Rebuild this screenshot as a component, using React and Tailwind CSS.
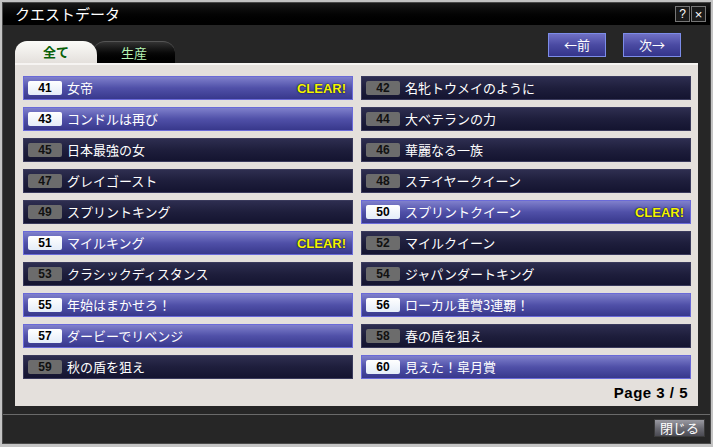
import React from 'react';

const quests = [
  { no: 41, title: '女帝', open: true, clear: true },
  { no: 42, title: '名牝トウメイのように' },
  { no: 43, title: 'コンドルは再び', open: true },
  { no: 44, title: '大ベテランの力' },
  { no: 45, title: '日本最強の女' },
  { no: 46, title: '華麗なる一族' },
  { no: 47, title: 'グレイゴースト' },
  { no: 48, title: 'ステイヤークイーン' },
  { no: 49, title: 'スプリントキング' },
  { no: 50, title: 'スプリントクイーン', open: true, clear: true },
  { no: 51, title: 'マイルキング', open: true, clear: true },
  { no: 52, title: 'マイルクイーン' },
  { no: 53, title: 'クラシックディスタンス' },
  { no: 54, title: 'ジャパンダートキング' },
  { no: 55, title: '年始はまかせろ！', open: true },
  { no: 56, title: 'ローカル重賞3連覇！', open: true },
  { no: 57, title: 'ダービーでリベンジ', open: true },
  { no: 58, title: '春の盾を狙え' },
  { no: 59, title: '秋の盾を狙え' },
  { no: 60, title: '見えた！皐月賞', open: true },
];

const jp = { fontFamily: '"Noto Sans CJK JP", "Liberation Sans", sans-serif' };
const num = { fontFamily: '"Liberation Sans", Arial, sans-serif' };

const QuestRow = ({ quest }) => (
  <div
    className={`flex items-center h-[24px] border ${
      quest.open
        ? 'border-[#6a6ad8] bg-gradient-to-b from-[#8080cc] via-[#5050a8] to-[#38388c]'
        : 'border-[#3a3a5c] bg-gradient-to-b from-[#2e2e50] via-[#1e1e3c] to-[#141430]'
    }`}
  >
    <div
      className={`ml-[4px] w-[34px] h-[14px] flex items-center justify-center text-[12px] font-bold leading-none rounded-[2px] ${
        quest.open ? 'bg-gradient-to-b from-[#ffffff] to-[#e4ecf8] text-black' : 'bg-[#6c6c6c] text-[#111]'
      }`}
      style={num}
    >
      {quest.no}
    </div>
    <span className="ml-[5px] -mt-[2px] text-white text-[13px] leading-none" style={jp}>
      {quest.title}
    </span>
    {quest.clear && (
      <span
        className="ml-auto mr-[6px] text-[#f4f400] text-[13px] font-bold leading-none [text-shadow:0_0_2px_#101040,0_0_1px_#101040]"
        style={num}
      >
        CLEAR!
      </span>
    )}
  </div>
);

const NavButton = ({ children }) => (
  <button
    className="w-[58px] h-[24px] border border-[#7c8ce8] bg-gradient-to-b from-[#7070c4] via-[#4a4aa2] to-[#34348a] text-white text-[13px] leading-none flex items-center justify-center"
    style={jp}
  >
    <span className="-mt-[2px]">{children}</span>
  </button>
);

const App = () => {
  return (
    <div className="w-[713px] h-[447px] bg-[#c4c4c4] pt-[2px] pl-[2px] pr-[2px] pb-[3px]">
      <div className="h-full border border-[#4a4a4a] bg-[#262626] flex flex-col">
        <div className="h-[22px] bg-gradient-to-b from-[#1a1a1a] to-[#000] flex items-center pl-[12px] pr-[4px]">
          <span className="-mt-[2px] text-white text-[15px] leading-none" style={jp}>クエストデータ</span>
          <div className="ml-auto flex gap-[1px]">
            <div className="w-[15px] h-[16px] border border-[#777] bg-[#1a1a1a] text-white text-[12px] leading-none flex items-center justify-center" style={num}>?</div>
            <div className="w-[15px] h-[16px] border border-[#777] bg-[#1a1a1a] text-white text-[13px] leading-none flex items-center justify-center" style={num}>×</div>
          </div>
        </div>

        <div className="h-[38px] flex items-end pl-[12px] pr-[29px]">
          <div className="flex items-end">
            <div
              className="w-[82px] h-[22px] bg-gradient-to-b from-[#fbfbf8] to-[#e4e0dc] rounded-tl-[12px] rounded-tr-[14px] flex items-center justify-center text-[#086008] text-[13px] font-bold leading-none z-10"
              style={jp}
            >
              <span className="-mt-[1px]">全て</span>
            </div>
            <div
              className="-ml-[4px] w-[82px] h-[22px] bg-gradient-to-b from-[#333] via-[#0a0a0a] to-[#000] border-t border-[#555] rounded-tl-[12px] rounded-tr-[12px] flex items-center justify-center text-[#b4f4b4] text-[13px] leading-none"
              style={jp}
            >
              <span className="-mt-[1px]">生産</span>
            </div>
          </div>
          <div className="ml-auto self-start mt-[8px] flex gap-[17px]">
            <NavButton>←前</NavButton>
            <NavButton>次→</NavButton>
          </div>
        </div>

        <div className="mx-[12px] h-[343px] bg-[#e4e0dc] border-t-[2px] border-[#f6f4f2] pt-[11px] pl-[8px] pr-[7px] flex flex-col">
          <div className="grid grid-cols-2 gap-x-[8px] gap-y-[7px]">
            {quests.map((q) => (
              <QuestRow key={q.no} quest={q} />
            ))}
          </div>
          <div className="mt-[6px] pr-[3px] text-right text-black text-[15px] font-bold leading-none tracking-[0.5px]" style={num}>
            Page 3 / 5
          </div>
        </div>

        <div className="mt-[8px] border-t border-[#6a6a6a] flex justify-end pr-[5px] pt-[4px]">
          <button
            className="w-[51px] h-[18px] border border-[#3a3a3a] bg-gradient-to-b from-[#9a9aa2] via-[#6c6c74] to-[#4a4a52] text-white text-[13px] leading-none flex items-center justify-center"
            style={jp}
          >
            <span className="-mt-[2px]">閉じる</span>
          </button>
        </div>
      </div>
    </div>
  );
};

export default App;
